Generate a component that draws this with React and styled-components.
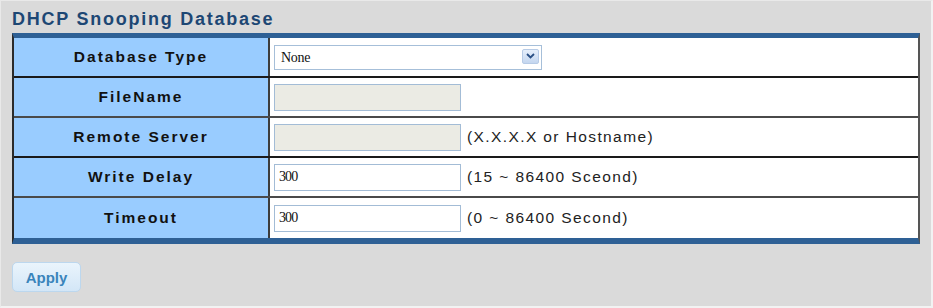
import React from "react";
import styled, { createGlobalStyle } from "styled-components";

const Global = createGlobalStyle`
  html, body { margin: 0; padding: 0; background: #dadada; }
  #root { width: 933px; height: 308px; }
`;

const Page = styled.div`
  box-sizing: border-box;
  width: 933px;
  height: 308px;
  border-top: 1px solid #e9e9e9;
  border-left: 1px solid #e9e9e9;
  border-right: 2px solid #f2f2f2;
  border-bottom: 2px solid #f2f2f2;
  padding: 6px 0 0 11px;
  background: #dadada;
`;

const Title = styled.h1`
  margin: 0;
  height: 26px;
  font-family: "Liberation Sans", Arial, sans-serif;
  font-size: 18px;
  font-weight: bold;
  letter-spacing: 1.75px;
  line-height: 24px;
  color: #1d4774;
`;

const Table = styled.div`
  width: 908px;
  box-sizing: border-box;
  border-top: 5px solid #2e6095;
  border-bottom: 6px solid #2e6095;
  border-left: 2px solid #2b2b2b;
  border-right: 2px solid #555;
  background: #fff;
`;

const Row = styled.div`
  display: grid;
  grid-template-columns: 256px 1fr;
  height: ${(p) => (p.$last ? 40 : 38)}px;
  border-bottom: ${(p) => (p.$last ? "none" : `2px solid ${p.$dark ? "#1a1a1a" : "#4a4a4a"}`)};
`;

const Label = styled.div`
  background: #99ccff;
  border-right: 2px solid #3c3c3c;
  display: flex;
  align-items: center;
  justify-content: center;
  font-family: "Liberation Sans", Arial, sans-serif;
  font-size: 15.5px;
  font-weight: bold;
  letter-spacing: 2px;
  color: #111;
`;

const Value = styled.div`
  display: flex;
  align-items: center;
  padding-left: 4px;
  gap: 6px;
`;

const SelectWrap = styled.div`
  position: relative;
  width: 268px;
  height: 25px;
`;

const Select = styled.select`
  appearance: none;
  -webkit-appearance: none;
  box-sizing: border-box;
  width: 100%;
  height: 100%;
  margin: 0;
  border: 1px solid #a6bfd9;
  background: #fff;
  padding: 0 0 0 6px;
  font-family: "Liberation Serif", "Times New Roman", serif;
  font-size: 14px;
  letter-spacing: -0.3px;
  color: #111;
  outline: none;
`;

const DropButton = styled.span`
  position: absolute;
  right: 3px;
  top: 4px;
  width: 17px;
  height: 15px;
  box-sizing: border-box;
  border: 1px solid #b7cbe6;
  border-radius: 2px;
  background: linear-gradient(#e6effb, #c4d6ef);
  display: flex;
  align-items: center;
  justify-content: center;
  pointer-events: none;
`;

const Input = styled.input`
  box-sizing: border-box;
  width: 187px;
  height: 27px;
  margin: 0;
  border: 1px solid #a3bcd6;
  background: ${(p) => (p.disabled ? "#ebebe4" : "#fff")};
  padding: 0 0 0 4px;
  font-family: "Liberation Serif", "Times New Roman", serif;
  font-size: 14px;
  letter-spacing: -0.9px;
  color: #111;
  outline: none;
`;

const Note = styled.span`
  font-family: "Liberation Sans", Arial, sans-serif;
  font-size: 15.5px;
  letter-spacing: 1.4px;
  color: #222;
`;

const Apply = styled.button`
  margin-top: 18px;
  width: 69px;
  height: 30px;
  box-sizing: border-box;
  border: 1px solid #bcd7ee;
  border-radius: 5px;
  background: linear-gradient(#eaf4fc, #d3e6f7);
  font-family: "Liberation Sans", Arial, sans-serif;
  font-size: 15px;
  font-weight: bold;
  color: #3a84bb;
  padding: 0;
`;

function Chevron() {
  return (
    <svg width="9" height="6" viewBox="0 0 9 6">
      <path d="M1 1 L4.5 4.5 L8 1" fill="none" stroke="#2a4f84" strokeWidth="1.8" />
    </svg>
  );
}

export default function App() {
  return (
    <>
      <Global />
      <Page>
        <Title>DHCP Snooping Database</Title>
        <Table>
          <Row $dark>
            <Label>Database Type</Label>
            <Value>
              <SelectWrap>
                <Select defaultValue="None">
                  <option>None</option>
                  <option>Local</option>
                  <option>TFTP</option>
                </Select>
                <DropButton>
                  <Chevron />
                </DropButton>
              </SelectWrap>
            </Value>
          </Row>
          <Row>
            <Label>FileName</Label>
            <Value>
              <Input disabled defaultValue="" />
            </Value>
          </Row>
          <Row $dark>
            <Label>Remote Server</Label>
            <Value>
              <Input disabled defaultValue="" />
              <Note>(X.X.X.X or Hostname)</Note>
            </Value>
          </Row>
          <Row>
            <Label>Write Delay</Label>
            <Value>
              <Input defaultValue="300" />
              <Note>(15 ~ 86400 Sceond)</Note>
            </Value>
          </Row>
          <Row $last>
            <Label>Timeout</Label>
            <Value>
              <Input defaultValue="300" />
              <Note>(0 ~ 86400 Second)</Note>
            </Value>
          </Row>
        </Table>
        <Apply>Apply</Apply>
      </Page>
    </>
  );
}
